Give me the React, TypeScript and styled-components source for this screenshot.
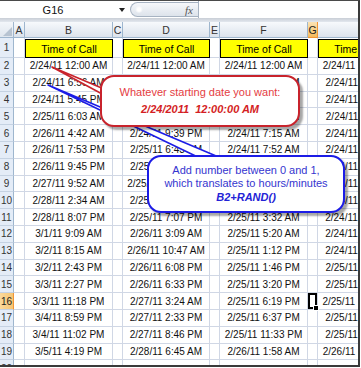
import React from 'react';
import styled, { createGlobalStyle, css } from 'styled-components';

const GlobalStyle = createGlobalStyle`
  html, body { margin: 0; padding: 0; background: #fff; }
  body { font-family: "Liberation Sans", Arial, sans-serif; }
`;

const Frame = styled.div`
  position: relative;
  width: 360px;
  height: 367px;
  box-sizing: border-box;
  overflow: hidden;
  background: #fff;
  border-top: 1px solid #4a4a4a;
  border-right: 2px solid #3a3a3a;
  border-bottom: 2px solid #3a3a3a;
  display: flex;
  flex-direction: column;
`;

const TopBar = styled.div`
  height: 17px;
  display: flex;
  align-items: center;
  background: #fff;
  flex-shrink: 0;
`;

const NameBox = styled.div`
  width: 106px;
  text-align: center;
  font-size: 11px;
  color: #111;
`;

const DropArrow = styled.div`
  margin-left: 13px;
  width: 0;
  height: 0;
  border-left: 3.5px solid transparent;
  border-right: 3.5px solid transparent;
  border-top: 4px solid #222;
`;

const FxPill = styled.div`
  position: relative;
  margin-left: 5px;
  width: 68px;
  height: 15px;
  box-sizing: border-box;
  border: 1px solid #a7b3c2;
  border-right: none;
  border-radius: 8px 0 0 8px;
  background: linear-gradient(#f6f8fb, #dde3eb);
  display: flex;
  align-items: center;
  justify-content: flex-end;
  padding-right: 5px;
`;

const Gloss = styled.span`
  position: absolute;
  left: 4px;
  top: 3px;
  width: 8px;
  height: 7px;
  border-radius: 50%;
  background: radial-gradient(circle, #ffffff 30%, rgba(255, 255, 255, 0) 75%);
`;

const FxLabel = styled.span`
  font-family: "Liberation Serif", "Times New Roman", serif;
  font-style: italic;
  font-size: 11px;
  color: #555;
`;

const FormulaInput = styled.div`
  flex: 1;
  height: 17px;
  border-left: 1px solid #a7b3c2;
  background: #fff;
`;

const Band = styled.div`
  height: 4px;
  flex-shrink: 0;
  background: linear-gradient(#c9ced6, #e2e7ee);
`;

const Sheet = styled.div`
  display: grid;
  grid-template-columns: 14px 11px 88px 10px 87px 10px 88px 10px 88px;
  grid-template-rows: 16px 20px repeat(19, 16.8px);
  overflow: hidden;
  flex: 1;
`;

const Corner = styled.div`
  position: relative;
  box-sizing: border-box;
  border-right: 1px solid #9eb6ce;
  border-bottom: 1px solid #9eb6ce;
  background: linear-gradient(#f3f6fa, #dfe6ee);
  &::after {
    content: '';
    position: absolute;
    right: 1px;
    bottom: 1px;
    width: 0;
    height: 0;
    border-left: 9px solid transparent;
    border-bottom: 9px solid #b7c3d1;
  }
`;

const ColHead = styled.div<{ $active?: boolean }>`
  box-sizing: border-box;
  border-right: 1px solid #9eb6ce;
  border-bottom: 1px solid #9eb6ce;
  background: linear-gradient(#f7f9fc 0%, #e9eef4 50%, #dce3ec 100%);
  color: #333;
  font-size: 10.5px;
  display: flex;
  align-items: center;
  justify-content: center;
  overflow: hidden;
  ${(p) =>
    p.$active &&
    css`
      background: linear-gradient(#fbe3b4 0%, #f8cf86 55%, #f4b95c 100%);
      border-right-color: #f29536;
      border-bottom-color: #f29536;
      color: #222;
    `}
`;

const RowHead = styled.div<{ $active?: boolean }>`
  box-sizing: border-box;
  border-right: 1px solid #9eb6ce;
  border-bottom: 1px solid #c5d2e2;
  background: #e4ecf7;
  color: #333;
  font-size: 10px;
  display: flex;
  align-items: center;
  justify-content: center;
  overflow: hidden;
  white-space: nowrap;
  ${(p) =>
    p.$active &&
    css`
      background: linear-gradient(90deg, #fbd99a, #f6c574);
      border-right-color: #f29536;
      color: #222;
    `}
`;

const Cell = styled.div<{ $title?: boolean; $selected?: boolean }>`
  position: relative;
  box-sizing: border-box;
  border-right: 1px solid #d0d7e5;
  border-bottom: 1px solid #d0d7e5;
  font-size: 10px;
  color: #111;
  display: flex;
  align-items: center;
  justify-content: center;
  white-space: nowrap;
  overflow: hidden;
  ${(p) =>
    p.$title &&
    css`
      background: #ffff00;
      border: 1px solid #000;
      margin-top: 1px;
      font-size: 10.5px;
      color: #000;
    `}
  ${(p) =>
    p.$selected &&
    css`
      overflow: visible;
      z-index: 2;
      box-shadow: inset 0 0 0 2px #000;
      &::after {
        content: '';
        position: absolute;
        right: -2px;
        bottom: -2px;
        width: 4px;
        height: 4px;
        background: #000;
        border: 1px solid #fff;
      }
    `}
`;

const Leaders = styled.svg`
  position: absolute;
  left: 0;
  top: 0;
  width: 361px;
  height: 368px;
  pointer-events: none;
  z-index: 3;
`;

const Callout = styled.div<{ $tone: 'red' | 'blue' }>`
  position: absolute;
  z-index: 4;
  box-sizing: border-box;
  background: #fff;
  border: 2px solid ${(p) => (p.$tone === 'red' ? '#c8232c' : '#1c1ce6')};
  border-radius: 14px;
  box-shadow: 3px 3px 2px rgba(0, 0, 0, 0.35);
  display: flex;
  flex-direction: column;
  align-items: center;
  justify-content: center;
  font-size: 11px;
  white-space: pre;
  color: ${(p) => (p.$tone === 'red' ? '#e43c42' : '#3535cf')};
  line-height: ${(p) => (p.$tone === 'red' ? '17px' : '13.5px')};
`;

const Emph = styled.span<{ $tone: 'red' | 'blue' }>`
  font-weight: bold;
  font-style: italic;
  color: ${(p) => (p.$tone === 'red' ? '#d41e24' : '#2323d6')};
`;

const colB = [
  '2/24/11 12:00 AM', '2/24/11 6:56 AM', '2/24/11 5:45 PM', '2/25/11 6:03 AM',
  '2/26/11 4:42 AM', '2/26/11 7:53 PM', '2/26/11 9:45 PM', '2/27/11 9:52 AM',
  '2/28/11 2:34 AM', '2/28/11 8:07 PM', '3/1/11 9:09 AM', '3/2/11 8:15 AM',
  '3/2/11 2:43 PM', '3/3/11 2:27 PM', '3/3/11 11:18 PM', '3/4/11 8:59 PM',
  '3/4/11 11:02 PM', '3/5/11 4:19 PM',
];
const colD = [
  '2/24/11 12:00 AM', '2/24/11 3:17 AM', '2/24/11 9:02 AM', '2/24/11 4:30 PM',
  '2/24/11 9:39 PM', '2/25/11 6:43 AM', '2/25/11 8:51 AM', '2/25/11 10:26 AM',
  '2/25/11 1:15 PM', '2/25/11 7:07 PM', '2/26/11 3:09 AM', '2/26/11 10:47 AM',
  '2/26/11 6:08 PM', '2/26/11 6:33 PM', '2/27/11 3:24 AM', '2/27/11 2:33 PM',
  '2/27/11 8:46 PM', '2/28/11 6:45 AM',
];
const colF = [
  '2/24/11 12:00 AM', '2/24/11 1:48 AM', '2/24/11 3:22 AM', '2/24/11 5:09 AM',
  '2/24/11 7:15 AM', '2/24/11 7:52 AM', '2/24/11 9:36 AM', '2/24/11 1:18 PM',
  '2/24/11 8:40 PM', '2/25/11 3:32 AM', '2/25/11 5:20 AM', '2/25/11 1:12 PM',
  '2/25/11 1:46 PM', '2/25/11 3:20 PM', '2/25/11 6:19 PM', '2/25/11 6:37 PM',
  '2/25/11 11:33 PM', '2/26/11 1:58 AM',
];
const colH = [
  '2/24/11 12:00 AM', '2/24/11 1:26 AM', '2/24/11 2:53 AM', '2/24/11 3:11 AM',
  '2/24/11 5:40 AM', '2/24/11 6:02 AM', '2/24/11 7:31 AM', '2/24/11 8:17 AM',
  '2/24/11 9:44 AM', '2/24/11 1:05 PM', '2/24/11 2:36 PM', '2/24/11 4:13 PM',
  '2/25/11 1:22 AM', '2/25/11 2:57 AM', '2/25/11 10:09 PM', '2/25/11 3:48 PM',
  '2/25/11 7:25 PM', '2/26/11 12:14 AM',
];

const letters = ['A', 'B', 'C', 'D', 'E', 'F', 'G', 'H'];

export default function App() {
  const rows: React.ReactNode[] = [];

  rows.push(<Corner key="corner" />);
  letters.forEach((l) => (
    rows.push(
      <ColHead key={`h-${l}`} $active={l === 'G'}>
        {l}
      </ColHead>
    )
  ));

  rows.push(<RowHead key="r1">1</RowHead>);
  letters.forEach((l) => {
    const isTitle = l === 'B' || l === 'D' || l === 'F' || l === 'H';
    rows.push(
      <Cell key={`1-${l}`} $title={isTitle}>
        {isTitle ? 'Time of Call' : ''}
      </Cell>
    );
  });

  for (let i = 0; i < 19; i++) {
    const rowNum = i + 2;
    const active = rowNum === 16;
    rows.push(
      <RowHead key={`r${rowNum}`} $active={active}>
        {rowNum <= 19 ? rowNum : 20}
      </RowHead>
    );
    const vals: Record<string, string> =
      i < 18 ? { B: colB[i], D: colD[i], F: colF[i], H: colH[i] } : {};
    letters.forEach((l) => {
      rows.push(
        <Cell key={`${rowNum}-${l}`} $selected={active && l === 'G'}>
          {vals[l] ?? ''}
        </Cell>
      );
    });
  }

  return (
    <>
      <GlobalStyle />
      <Frame>
        <TopBar>
          <NameBox>G16</NameBox>
          <DropArrow />
          <FxPill>
            <Gloss />
            <FxLabel>fx</FxLabel>
          </FxPill>
          <FormulaInput />
        </TopBar>
        <Band />
        <Sheet>{rows}</Sheet>

        <Leaders viewBox="0 0 361 368">
          <polygon
            points="52,66 104,88 104,94"
            fill="#fff"
            stroke="#c8232c"
            strokeWidth="1.6"
            strokeLinejoin="round"
          />
          <polygon
            points="48,84 206,160 228,160"
            fill="#fff"
            stroke="#1c1ce6"
            strokeWidth="1.6"
            strokeLinejoin="round"
          />
        </Leaders>

        <Callout $tone="red" style={{ left: 100, top: 74, width: 200, height: 52 }}>
          <span>Whatever starting date you want:</span>
          <Emph $tone="red">{'2/24/2011  12:00:00 AM'}</Emph>
        </Callout>

        <Callout $tone="blue" style={{ left: 147, top: 154, width: 198, height: 58 }}>
          <span>Add number between 0 and 1,</span>
          <span>which translates to hours/minutes</span>
          <Emph $tone="blue">B2+RAND()</Emph>
        </Callout>
      </Frame>
    </>
  );
}
